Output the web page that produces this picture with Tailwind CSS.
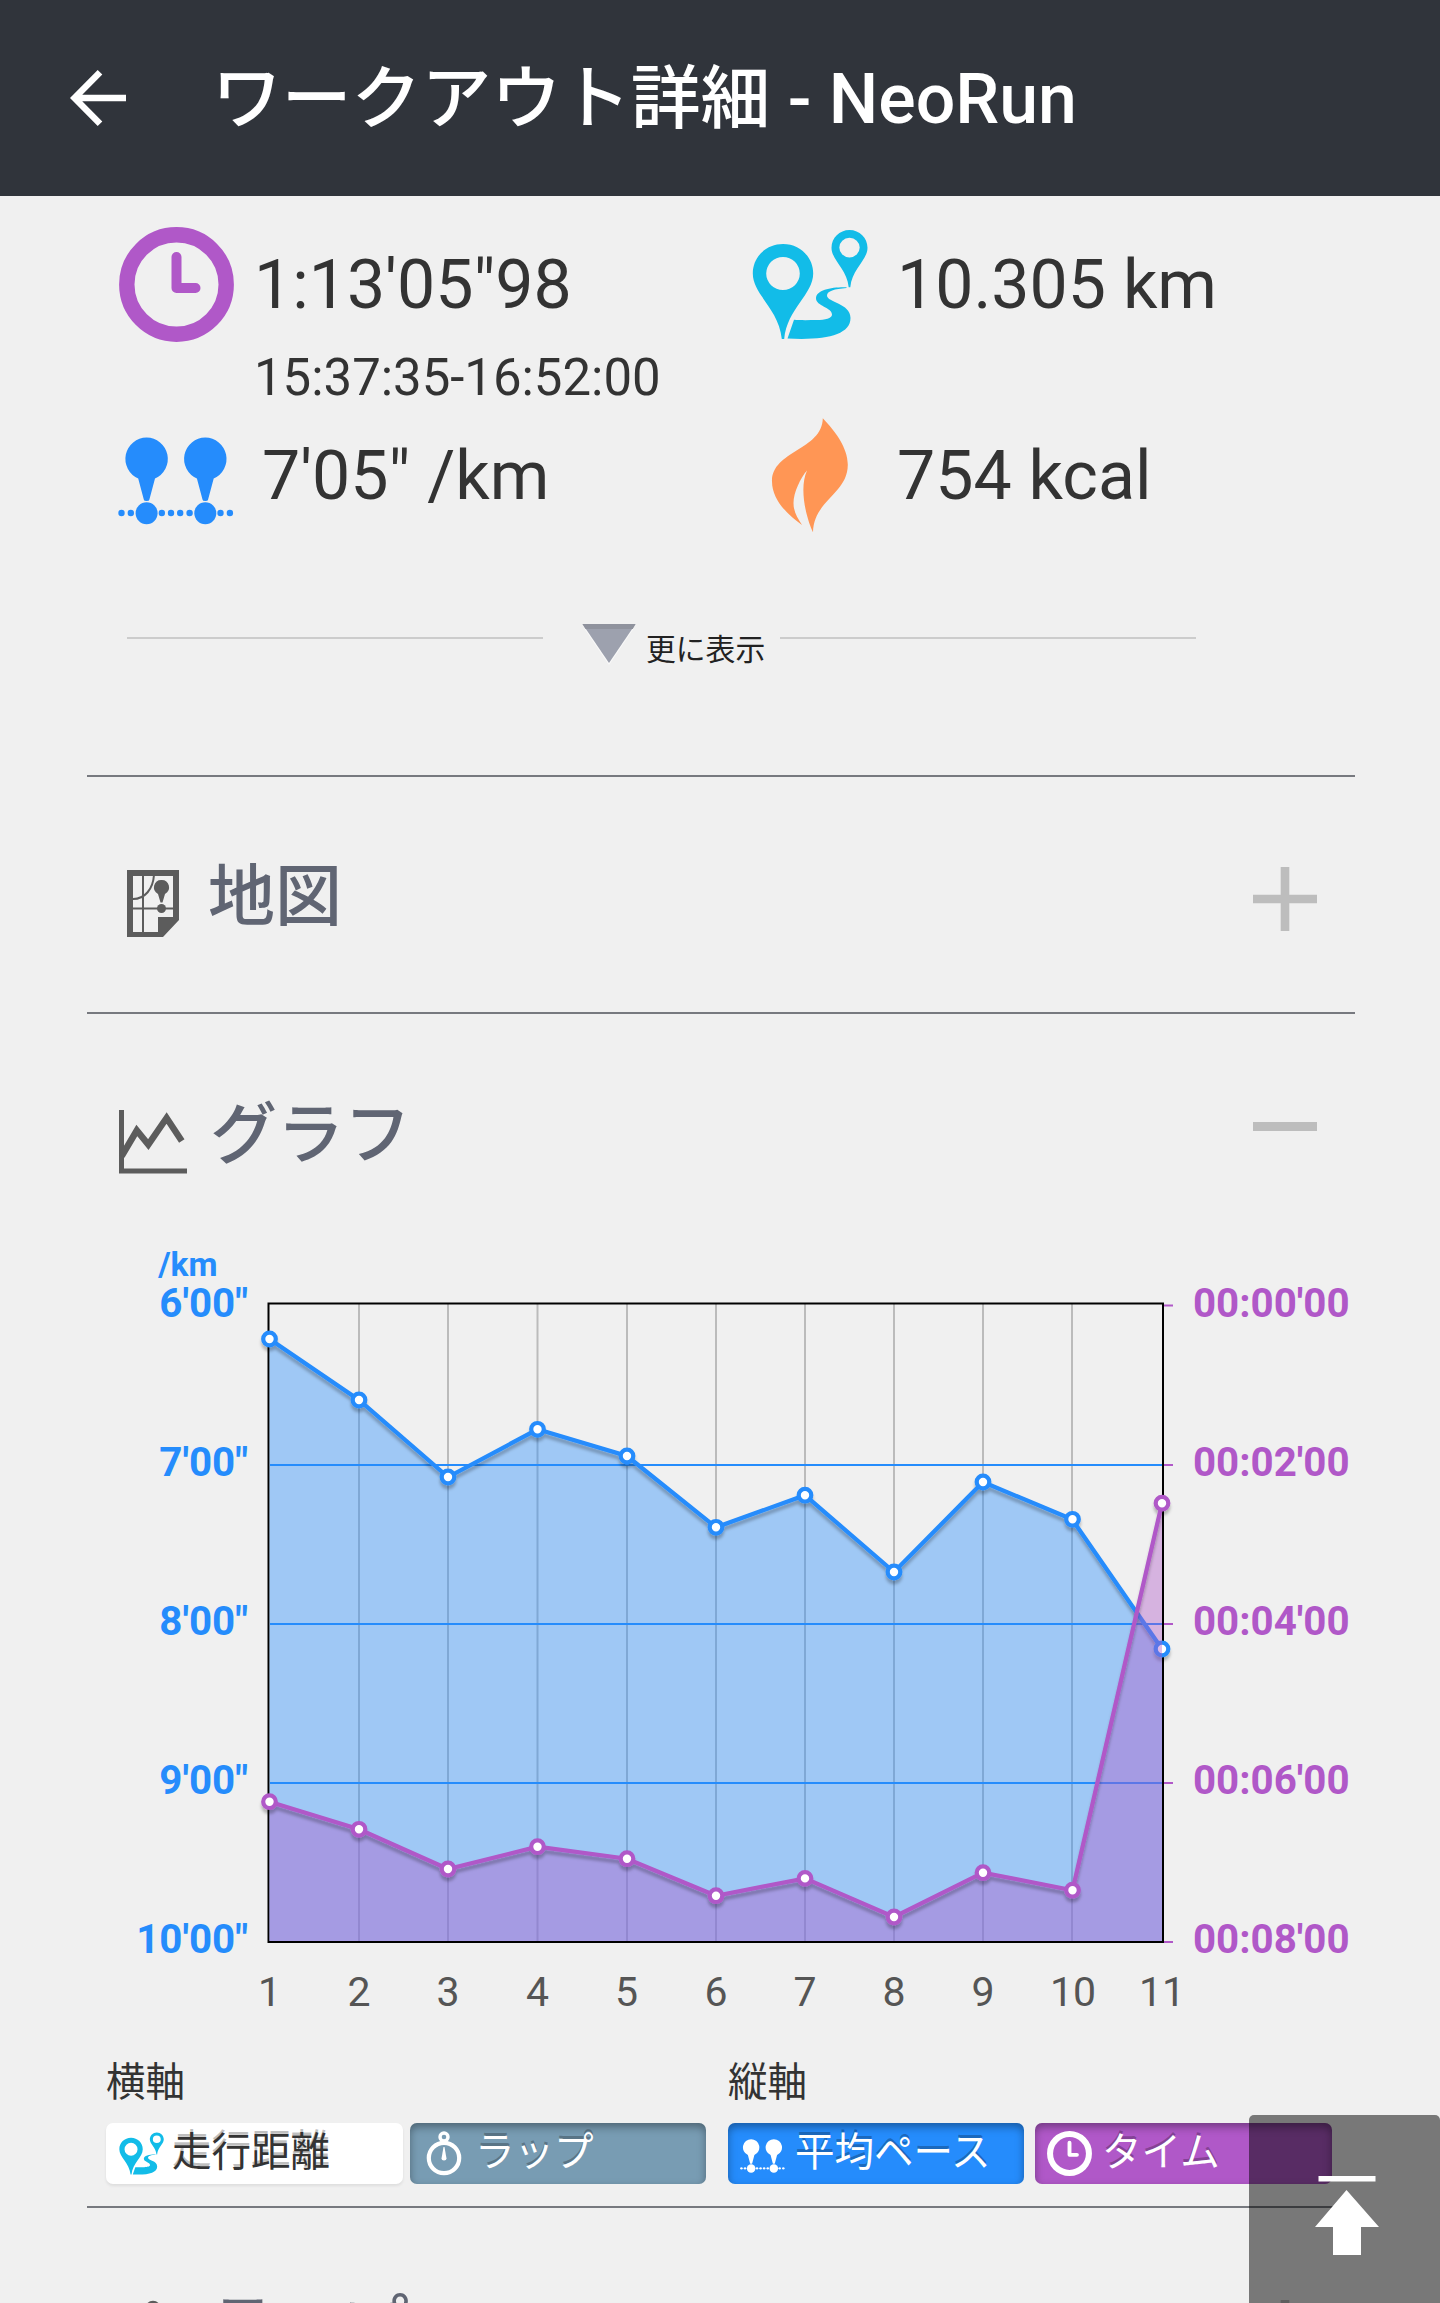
<!DOCTYPE html>
<html lang="ja">
<head>
    <meta charset="UTF-8">
    <meta name="viewport" content="width=device-width, initial-scale=1.0">
    <title>ワークアウト詳細 - NeoRun</title>
    <script src="https://cdn.jsdelivr.net/npm/@tailwindcss/browser@4"></script>
</head>
<body class="bg-[#f0f0f0] h-[2303px] overflow-hidden relative text-[#333] font-[Roboto,'Noto_Sans_CJK_JP',sans-serif]">
    <!-- 共通アイコン -->
    <svg class="hidden">
        <symbol id="icon-clock" viewBox="0 0 115 115">
            <circle cx="57.5" cy="57.5" r="49.7" fill="none" stroke="currentColor" stroke-width="15.4"/>
            <path d="M57.5 30v31h19" fill="none" stroke="currentColor" stroke-width="10" stroke-linecap="round" stroke-linejoin="round"/>
        </symbol>
        <symbol id="icon-route" viewBox="752 229 116 111">
            <path fill-rule="evenodd" d="M783 244c17 0 30.200 13 30.200 29.500 0 21-26 35-29 65.500h-2.400c-3-30.500-29-44.500-29-65.500 0-16.500 13.200-29.500 30.200-29.500zm0 13a16.800 16.500 0 1 0 0 33 16.800 16.500 0 1 0 0-33z" fill="currentColor"/>
            <path fill-rule="evenodd" d="M849.500 230c10 0 18 8 18 17.700 0 12.500-15.500 21-17.200 39.600h-1.600c-1.700-18.600-17.200-27.100-17.200-39.600 0-9.700 8-17.700 18-17.700zm0 7.800a10.200 9.800 0 1 0 0 19.600 10.200 9.800 0 1 0 0-19.600z" fill="currentColor"/>
            <path d="M846.500 287.200c-14-.5-30.500 2.500-30.500 11 0 8 16 9 16 16.300 0 4-7 5.500-15 5.500-9 .2-17 .3-23-.2l-6.500 18.700c38 2 63-3.500 63-20.500 0-15-23.500-15.500-23.500-22.500 0-4.500 7.500-6.600 19.500-7.500z" fill="currentColor"/>
        </symbol>
        <symbol id="icon-pace" viewBox="118 437 116 88">
            <g fill="currentColor">
                <path d="M146.600 437.500a21.400 21.400 0 0 1 8.400 41l-5.600 21a2.800 1.500 0 0 1-5.600 0l-5.600-21a21.400 21.400 0 0 1 8.400-41zM205.300 437.500a21.400 21.400 0 0 1 8.400 41l-5.600 21a2.800 1.500 0 0 1-5.600 0l-5.600-21a21.400 21.400 0 0 1 8.400-41z"/>
                <circle cx="146.600" cy="513.300" r="11"/><circle cx="205.300" cy="513.300" r="11"/>
                <circle cx="121.500" cy="513" r="3.200"/><circle cx="130.800" cy="513" r="3.200"/>
                <circle cx="161.800" cy="513" r="3.200"/><circle cx="171" cy="513" r="3.200"/><circle cx="180.200" cy="513" r="3.200"/><circle cx="189.600" cy="513" r="3.200"/>
                <circle cx="220.500" cy="513" r="3.200"/><circle cx="229.900" cy="513" r="3.200"/>
            </g>
        </symbol>
        <symbol id="icon-plus" viewBox="0 0 64 64">
            <path d="M27.700 0h8.600v27.700H64v8.600H36.300V64h-8.600V36.300H0v-8.600h27.700z" fill="#bdbdbd"/>
        </symbol>
        <symbol id="icon-lap" viewBox="0 0 36 46">
            <circle cx="18" cy="28" r="15.200" fill="none" stroke="currentColor" stroke-width="4.200"/>
            <circle cx="18" cy="7" r="4" fill="none" stroke="currentColor" stroke-width="3.400"/>
            <path d="M17.500 17h1l2 11.500a2.500 2 0 0 1-5 0z" fill="currentColor"/>
        </symbol>
    </svg>

    <!-- ヘッダー -->
    <header class="h-[196px] bg-[#30343b] text-white flex items-center pl-[70px]">
        <svg class="w-14 h-14 mr-[86px]" viewBox="0 0 56 56" fill="none" stroke="currentColor" stroke-width="6.500"><path d="M30 2.300 4.500 28 30 53.700M4.500 28H56"/></svg>
        <h1 class="text-[69.800px] leading-[80px] mt-[1px] font-medium whitespace-nowrap">ワークアウト詳細 - NeoRun</h1>
    </header>

    <main class="pl-[87px] pr-[85px]">
        <!-- サマリー -->
        <section class="h-[579px] flex flex-col">
            <div class="flex h-[349px] pt-[22px] pl-8 text-[68px] leading-[80px]">
                <div class="w-[633px] pt-[9px]">
                    <div class="flex">
                        <svg class="w-[115px] h-[115px] text-[#b058c8]"><use href="#icon-clock"/></svg>
                        <div class="ml-5 pt-[18px]">
                            <p>1:13'05"98</p>
                            <p class="text-[50.900px] leading-[60px] mt-[23px] whitespace-nowrap">15:37:35-16:52:00</p>
                        </div>
                    </div>
                    <div class="flex mt-[10px] pt-1">
                        <svg class="w-[116px] h-[88px] text-[#258cfc] mt-[15px] -ml-px"><use href="#icon-pace"/></svg>
                        <p class="ml-[28px] mt-[14px]">7'05" /km</p>
                    </div>
                </div>
                <div>
                    <div class="flex pt-[11px] h-[122px]">
                        <svg class="w-[116px] h-[111px] text-[#12bce8]"><use href="#icon-route"/></svg>
                        <p class="ml-[29px] mt-4">10.305 km</p>
                    </div>
                    <div class="flex mt-[78px]">
                        <svg class="w-[77px] h-[115px] ml-[19px]" viewBox="771 418 77 115" fill="#ff9655"><path d="M822.800 418.300C835 431 848 448 847.800 465c-.3 29-34 35-34.800 67.300-5-10-15-42-6-61.800-6.500 7.500-13.500 22-13.500 32.500 0 9 4 15 8.500 22-14-10-30-25-30-43.500 0-31 50-31 50.800-63.200z"/></svg>
                        <p class="ml-[49px] mt-[18px]">754 kcal</p>
                    </div>
                </div>
            </div>
            <div class="flex items-center mt-[67px] ml-10 h-[52px]">
                <div class="w-[416px] h-[2px] bg-[#ccc]"></div>
                <svg class="w-[54px] h-[42px] ml-[39px] mt-[14px]" viewBox="0 0 54 42"><path d="M2 4h50L27 41z" fill="#fafafa"/><path d="M.500 0h53L27 39z" fill="#9da1ae"/><path d="M.500 0h53l-2.700 5H3.500z" fill="#8f929d"/></svg>
                <p class="ml-[10px] mt-[23px] text-[29.800px] leading-9 text-[#222]">更に表示</p>
                <div class="ml-[15px] w-[416px] h-[2px] bg-[#ccc]"></div>
            </div>
        </section>

        <!-- 地図 -->
        <section class="h-[237px] border-t-2 border-[#77797f] flex items-start">
            <svg class="w-[52px] h-[67px] ml-10 mt-[93px]" viewBox="0 0 52 67">
                <path fill-rule="evenodd" fill="#5c5c5c" d="M0 0h52v50L36 67H0zM6 6v56h25V47h15V6z"/>
                <path d="M16 5v58M5 38.500h42M27 5c-1 14-9 24-21 24" fill="none" stroke="#5c5c5c" stroke-width="2"/>
                <circle cx="34.500" cy="38.500" r="4.500" fill="#5c5c5c"/>
                <path d="M34.500 10a7.400 7.400 0 0 1 3.500 14l-2.500 8.500h-2L31 24a7.400 7.400 0 0 1 3.500-14z" fill="#5c5c5c"/>
            </svg>
            <h2 class="ml-[29px] mt-[80px] text-[67px] leading-[80px] font-medium text-[#606573]">地図</h2>
            <svg class="w-16 h-16 ml-auto mr-[38px] mt-[90px]"><use href="#icon-plus"/></svg>
        </section>

        <!-- グラフ -->
        <section class="h-[1194px] border-t-2 border-[#77797f]">
            <div class="flex items-start h-[216px]">
                <svg class="w-[68px] h-[64px] ml-8 mt-24" viewBox="119 1110 68 64" fill="none" stroke="#5c5c5c"><path d="M121.500 1110v61h65.500" stroke-width="5"/><path d="m121.700 1156 15.100-25.500 11.500 14 18.300-26.500 15.200 23" stroke-width="6.500"/></svg>
                <h2 class="ml-[23px] mt-[81px] text-[67px] leading-[80px] font-medium text-[#606573]">グラフ</h2>
                <div class="w-16 h-[9px] bg-[#bdbdbd] ml-auto mr-[38px] mt-[108px]"></div>
            </div>
            <svg class="w-[1268px] h-[790px]" viewBox="87 1230 1268 790">
                <defs>
                    <filter id="shade" x="-5%" y="-5%" width="110%" height="115%"><feDropShadow dx="0" dy="4" stdDeviation="1.500" flood-color="#000" flood-opacity="0.25"/></filter>
                </defs>
                <path d="M359 1303v638M448 1303v638M537.500 1303v638M627 1303v638M716 1303v638M805 1303v638M894 1303v638M983 1303v638M1072 1303v638" stroke="#bbb" stroke-width="2"/>
                <path d="M268.500 1303.500H1163V1942H268.500z" fill="none" stroke="#000" stroke-width="2"/>
                <!-- 平均ペース -->
                <path d="M269.500 1339 359 1400l89 77 89.500-47.700L627 1456l89 71.300 89-32.100 89 76.800 89-90 89 37.300 90 129.700v292H269.500z" fill="#258cfc" fill-opacity=".4"/>
                <path d="M270 1465h892M270 1624h892M270 1783h892" stroke="#258cfc" stroke-width="2"/>
                <g filter="url(#shade)" stroke="#258cfc" fill="#fff" stroke-width="4.200">
                    <path d="M269.500 1339 359 1400l89 77 89.500-47.700L627 1456l89 71.300 89-32.100 89 76.800 89-90 89 37.300 90 129.700" fill="none"/>
                    <circle cx="269.500" cy="1339" r="6.300"/><circle cx="359" cy="1400" r="6.300"/><circle cx="448" cy="1477" r="6.300"/><circle cx="537.500" cy="1429.300" r="6.300"/><circle cx="627" cy="1456" r="6.300"/><circle cx="716" cy="1527.300" r="6.300"/><circle cx="805" cy="1495.200" r="6.300"/><circle cx="894" cy="1572" r="6.300"/><circle cx="983" cy="1482" r="6.300"/><circle cx="1072.500" cy="1519.300" r="6.300"/><circle cx="1162" cy="1649" r="6.300"/>
                </g>
                <!-- タイム -->
                <path d="M269.500 1801.700 359 1829.300l89 39.700 89.500-22.300 89.500 12 89 37 89-17.300 89 38.600 89-44.300 89.500 17.500 89.500-387V1941H269.500z" fill="#b058c8" fill-opacity=".4"/>
                <g filter="url(#shade)" stroke="#b058c8" fill="#fff" stroke-width="4.200">
                    <path d="M269.500 1801.700 359 1829.300l89 39.700 89.500-22.300 89.500 12 89 37 89-17.300 89 38.600 89-44.300 89.500 17.500 89.500-387" fill="none"/>
                    <circle cx="269.500" cy="1801.700" r="6.300"/><circle cx="359" cy="1829.300" r="6.300"/><circle cx="448" cy="1869" r="6.300"/><circle cx="537.500" cy="1846.700" r="6.300"/><circle cx="627" cy="1858.700" r="6.300"/><circle cx="716" cy="1895.700" r="6.300"/><circle cx="805" cy="1878.400" r="6.300"/><circle cx="894" cy="1917" r="6.300"/><circle cx="983" cy="1872.700" r="6.300"/><circle cx="1072.500" cy="1890.200" r="6.300"/><circle cx="1162" cy="1503.200" r="6.300"/>
                </g>
                <path d="M1164 1305.500h9M1164 1465h9M1164 1624h9M1164 1783h9M1164 1942h9" stroke="#b058c8" stroke-width="2"/>
                <!-- 軸ラベル -->
                <g class="text-[40.300px] font-bold" fill="#258cfc" text-anchor="end">
                    <text x="217.500" y="1275.500" class="text-[33.500px]">/km</text>
                    <text x="248" y="1316.500">6'00"</text><text x="248" y="1475.500">7'00"</text><text x="248" y="1634.500">8'00"</text><text x="248" y="1793.500">9'00"</text><text x="248" y="1952.500">10'00"</text>
                </g>
                <g class="text-[40.300px] font-bold" fill="#b058c8">
                    <text x="1193" y="1316.500">00:00'00</text><text x="1193" y="1475.500">00:02'00</text><text x="1193" y="1634.500">00:04'00</text><text x="1193" y="1793.500">00:06'00</text><text x="1193" y="1952.500">00:08'00</text>
                </g>
                <g class="text-[41px]" fill="#555" text-anchor="middle">
                    <text x="269.500" y="2005.500">1</text><text x="359" y="2005.500">2</text><text x="448" y="2005.500">3</text><text x="537.500" y="2005.500">4</text><text x="626.500" y="2005.500">5</text><text x="716" y="2005.500">6</text><text x="805" y="2005.500">7</text><text x="894" y="2005.500">8</text><text x="983" y="2005.500">9</text><text x="1073" y="2005.500">10</text><text x="1162" y="2005.500">11</text>
                </g>
            </svg>
            <!-- 軸の選択 -->
            <div class="flex pl-[19px] mt-[36px] text-[39.500px] leading-[54px]">
                <div class="w-[622px]">
                    <p>横軸</p>
                    <div class="flex gap-[7px] mt-[13px] whitespace-nowrap">
                        <button class="w-[297px] h-[61px] rounded-[7px] bg-white shadow-[0_2px_3px_rgba(0,0,0,0.08)] flex pl-[13px] text-shadow-[0_-3px_0_rgba(0,0,0,0.25)]">
                            <svg class="w-[45px] h-[43px] mt-[9px] text-[#12bce8]"><use href="#icon-route"/></svg>
                            <span class="ml-[8px] mt-[3px]">走行距離</span>
                        </button>
                        <button class="w-[296px] h-[61px] rounded-[7px] bg-[#789cb3] text-white shadow-[inset_0_4px_9px_rgba(0,0,0,0.35)] flex pl-[16px] text-shadow-[0_-3px_0_rgba(0,0,0,0.25)]">
                            <svg class="w-[36px] h-[46px] mt-[7px]"><use href="#icon-lap"/></svg>
                            <span class="ml-[13px] mt-[3px]">ラップ</span>
                        </button>
                    </div>
                </div>
                <div>
                    <p>縦軸</p>
                    <div class="flex gap-[11px] mt-[13px] whitespace-nowrap">
                        <button class="w-[296px] h-[61px] rounded-[7px] bg-[#258cfc] text-white shadow-[inset_0_4px_9px_rgba(0,0,0,0.35)] flex pl-3 text-shadow-[0_-3px_0_rgba(0,0,0,0.25)]">
                            <svg class="w-[45px] h-[34px] mt-4"><use href="#icon-pace"/></svg>
                            <span class="ml-[10px] mt-[3px]">平均ペース</span>
                        </button>
                        <button class="w-[297px] h-[61px] rounded-[7px] bg-[#b058c8] text-white shadow-[inset_0_4px_9px_rgba(0,0,0,0.35)] flex pl-3 text-shadow-[0_-3px_0_rgba(0,0,0,0.25)]">
                            <svg class="w-[45px] h-[45px] mt-2"><use href="#icon-clock"/></svg>
                            <span class="ml-[10px] mt-[3px]">タイム</span>
                        </button>
                    </div>
                </div>
            </div>
        </section>

        <!-- ラップ -->
        <section class="h-[97px] overflow-hidden border-t-2 border-[#77797f] flex items-start">
            <svg class="w-[52px] h-[66px] ml-10 mt-[91px] text-[#5c5c5c] shrink-0"><use href="#icon-lap"/></svg>
            <h2 class="ml-[29px] mt-[79px] text-[67px] leading-[80px] font-medium text-[#606573]">ラップ</h2>
            <svg class="w-16 h-16 ml-auto mr-[38px] mt-[92px]"><use href="#icon-plus"/></svg>
        </section>
    </main>

    <!-- トップへ戻る -->
    <a href="#" class="absolute left-[1249px] top-[2115px] w-[191px] h-[188px] rounded-t-[5px] bg-black/50">
        <svg class="w-16 h-20 ml-[66px] mt-[61px]" viewBox="0 0 64 80" fill="#fff"><path d="M3.500 0h57v5.500h-57zM31.500 14 64 51H46v28H18V51H0z"/></svg>
    </a>
</body>
</html>
